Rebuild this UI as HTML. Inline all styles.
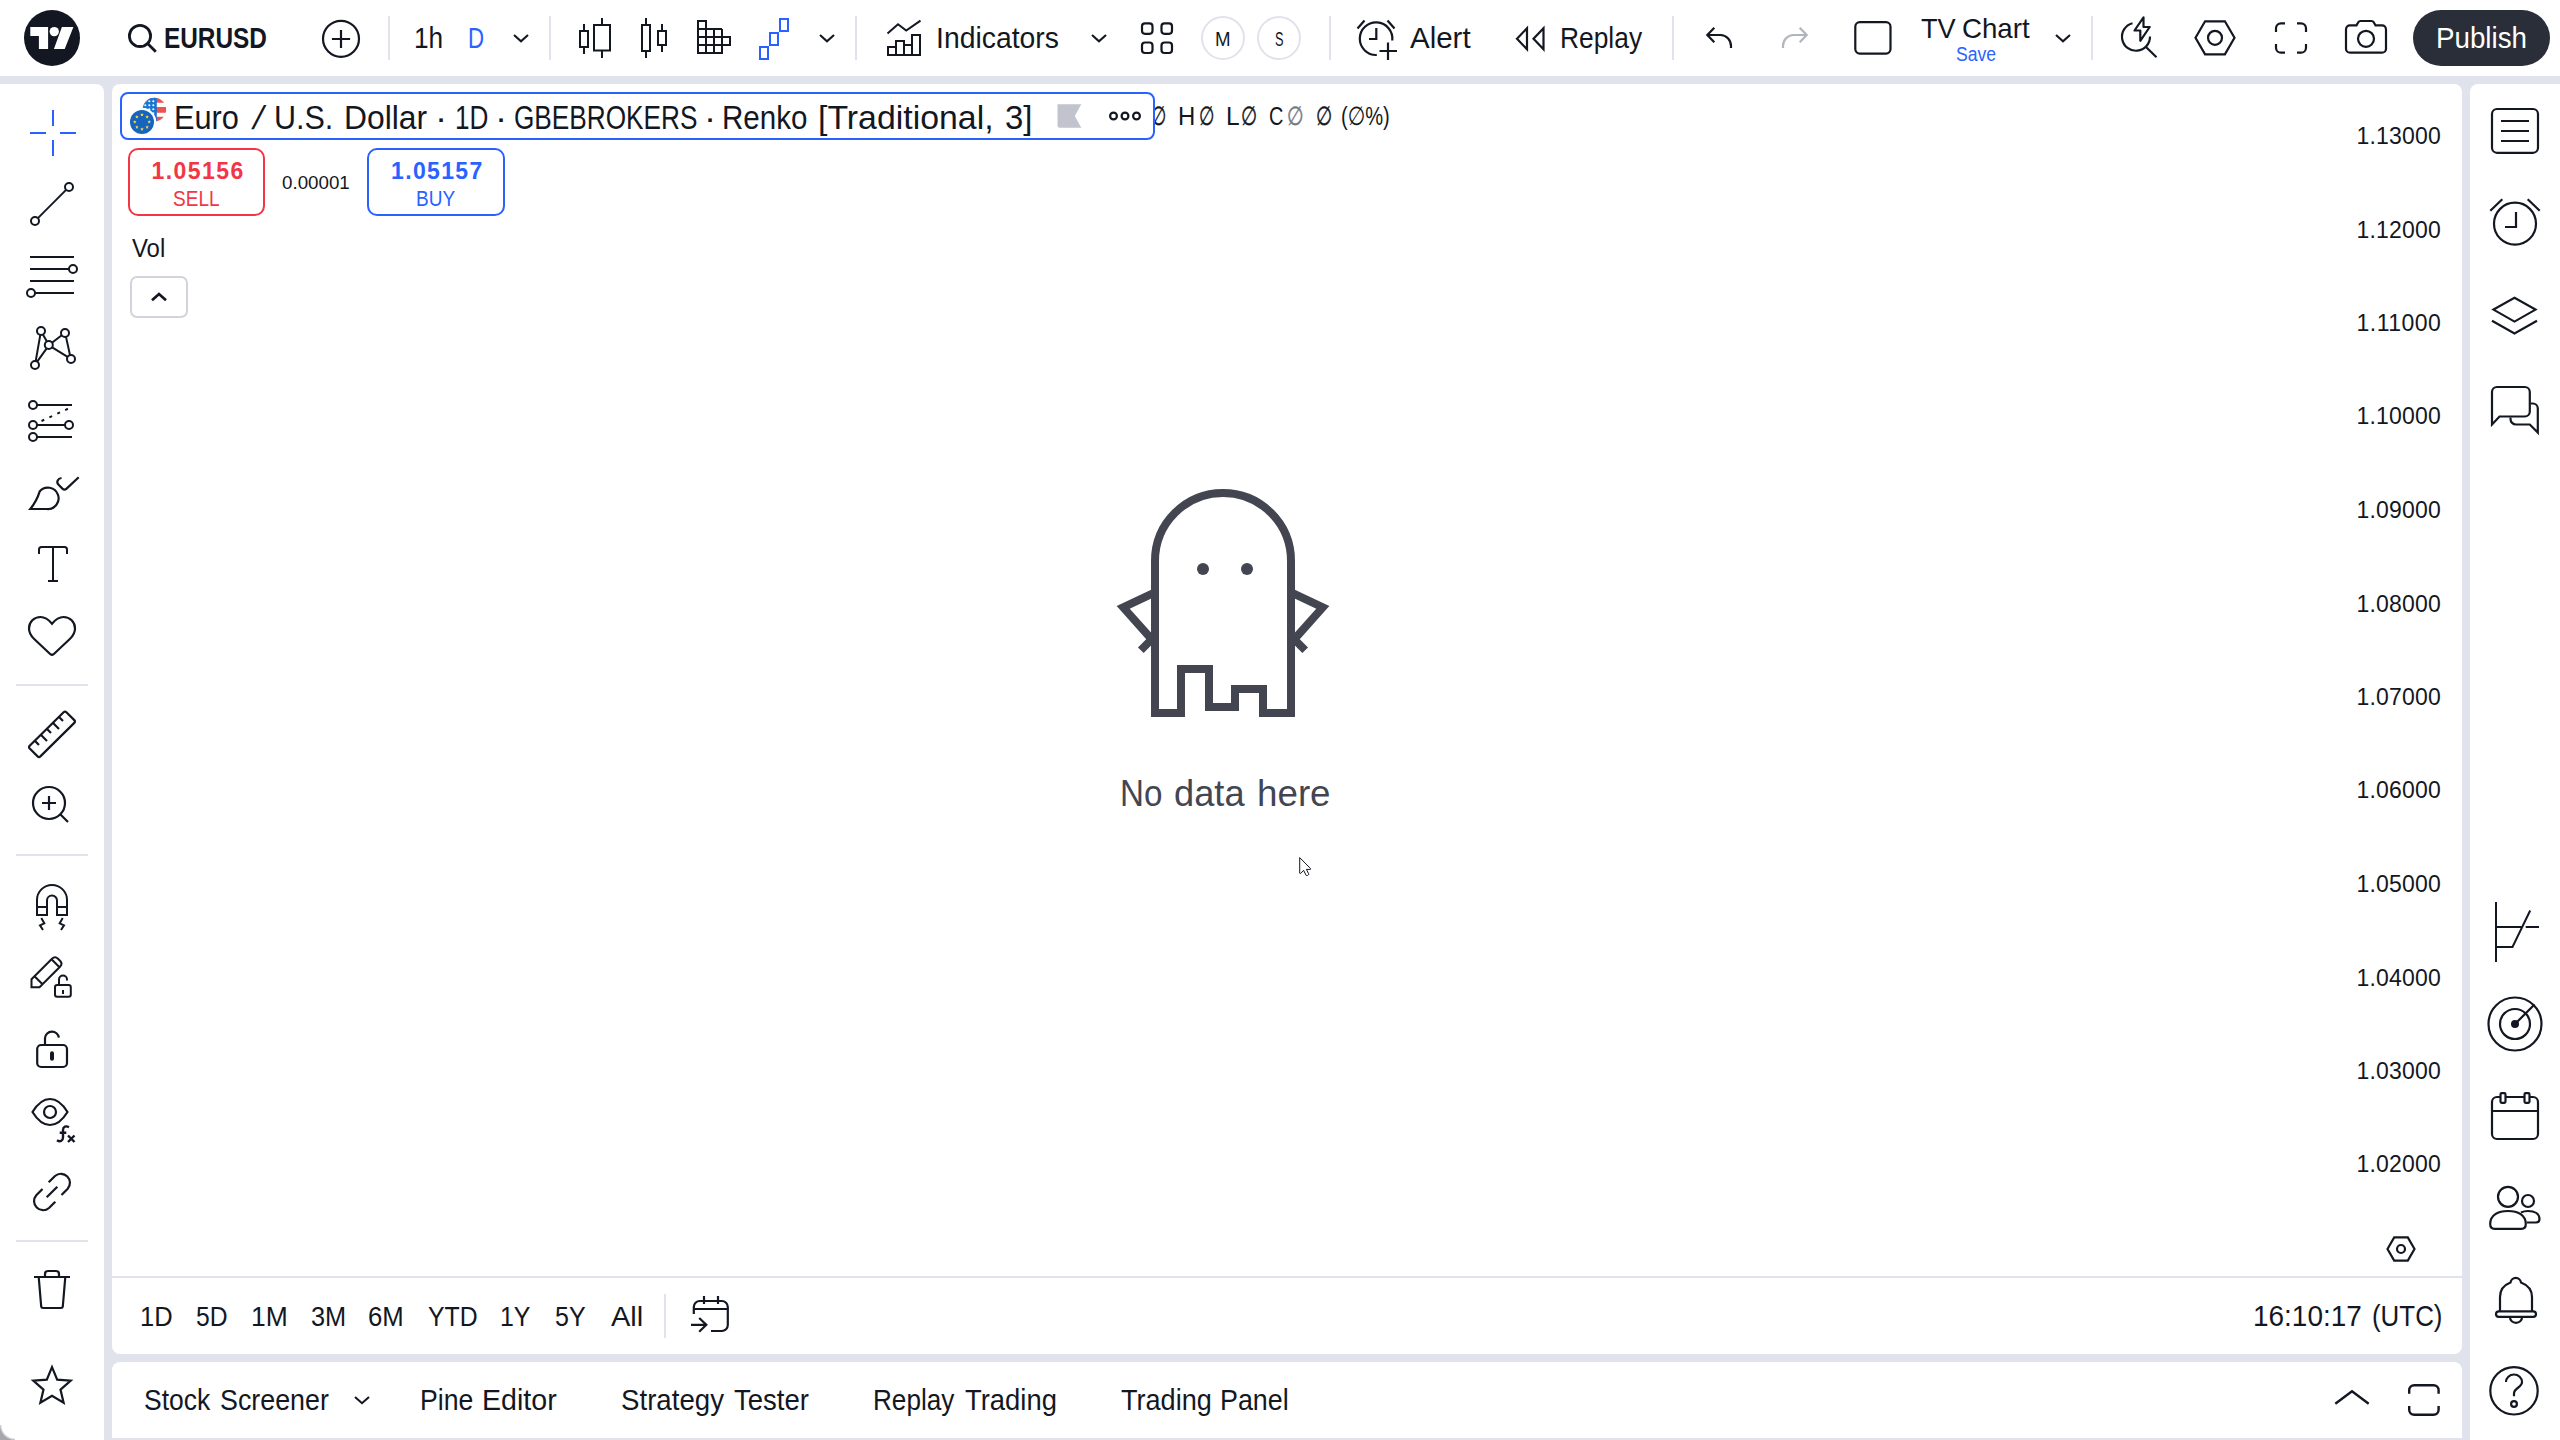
<!DOCTYPE html>
<html lang="en"><head><meta charset="utf-8"><title>EURUSD chart</title>
<style>
html,body{margin:0;padding:0}
body{width:2560px;height:1440px;overflow:hidden;background:#e0e3eb;position:relative;font-family:"Liberation Sans","DejaVu Sans",sans-serif;color:#131722}
.panel{position:absolute;background:#fff}
.t{position:absolute;white-space:nowrap;transform-origin:0 50%;display:inline-block}
.ic{position:absolute;overflow:visible;stroke-linecap:butt;stroke-linejoin:miter}
.sep{position:absolute;background:#e0e3eb}
.abs{position:absolute;box-sizing:border-box}
@media (max-width:1400px){html{zoom:.5}}
</style></head><body>
<header id="header-toolbar">
<div class="panel" style="left:0;top:0;width:2560px;height:76px"></div>
<div class="abs" style="left:24px;top:10px;width:56px;height:56px;border-radius:50%;background:#131722"></div>
<svg class="ic" style="left:24px;top:10px" width="56" height="56" viewBox="24 10 56 56" fill="none" stroke="#131722" stroke-width="2" ><path d="M30.3 27H48.1V49H38.9V36.1H30.3Z M61.9 27H73.4L64.7 49H53.9Z" fill="#fff" stroke="none"/><circle cx="54.25" cy="31.6" r="4.65" fill="#fff" stroke="none"/></svg>
<svg class="ic" style="left:126px;top:22px" width="32" height="32" viewBox="126 22 32 32" fill="none" stroke="#131722" stroke-width="2.8" ><circle cx="140" cy="35.9" r="10.6"/><path d="M147.6 43.5l8.2 8.2"/></svg>
<span class="t" style="left:164.16px;top:24.00px;font-size:29px;line-height:29px;color:#131722;font-weight:700;transform:scaleX(0.8406);">EURUSD</span>
<svg class="ic" style="left:320px;top:18px" width="42" height="42" viewBox="320 18 42 42" fill="none" stroke="#131722" stroke-width="2.2" ><circle cx="341" cy="38.8" r="18"/><path d="M331.9 39h18.2M341 29.9v18.2"/></svg>
<div class="sep" style="left:388px;top:16px;width:2px;height:44px"></div>
<div class="sep" style="left:549px;top:16px;width:2px;height:44px"></div>
<div class="sep" style="left:855px;top:16px;width:2px;height:44px"></div>
<div class="sep" style="left:1329px;top:16px;width:2px;height:44px"></div>
<div class="sep" style="left:1672px;top:16px;width:2px;height:44px"></div>
<div class="sep" style="left:2091px;top:16px;width:2px;height:44px"></div>
<span class="t" style="left:414.39px;top:24.00px;font-size:29px;line-height:29px;color:#131722;font-weight:400;transform:scaleX(0.9029);">1h</span>
<span class="t" style="left:468.47px;top:24.00px;font-size:29px;line-height:29px;color:#2962ff;font-weight:400;transform:scaleX(0.7667);">D</span>
<svg class="ic" style="left:511.7px;top:33px" width="18" height="10.4" viewBox="511.7 33 18 10.4" fill="none" stroke="#131722" stroke-width="2.1" ><path d="M513.7 35l7 6.4l7 -6.4"/></svg>
<svg class="ic" style="left:818px;top:32.8px" width="18" height="10.4" viewBox="818 32.8 18 10.4" fill="none" stroke="#131722" stroke-width="2.1" ><path d="M820 34.8l7 6.4l7 -6.4"/></svg>
<svg class="ic" style="left:1090px;top:32.8px" width="18" height="10.4" viewBox="1090 32.8 18 10.4" fill="none" stroke="#131722" stroke-width="2.1" ><path d="M1092 34.8l7 6.4l7 -6.4"/></svg>
<svg class="ic" style="left:2054.3px;top:32.8px" width="18" height="10.4" viewBox="2054.3 32.8 18 10.4" fill="none" stroke="#131722" stroke-width="2.1" ><path d="M2056.3 34.8l7 6.4l7 -6.4"/></svg>
<span class="t" style="left:935.54px;top:24.00px;font-size:29px;line-height:29px;color:#131722;font-weight:400;transform:scaleX(0.9779);">Indicators</span>
<div class="abs" style="left:1201px;top:16px;width:44px;height:44px;border-radius:50%;border:2px solid #e0e3eb"></div>
<div class="abs" style="left:1257px;top:16px;width:44px;height:44px;border-radius:50%;border:2px solid #e0e3eb"></div>
<span class="t" style="left:1215.07px;top:29.00px;font-size:20px;line-height:20px;color:#131722;font-weight:400;transform:scaleX(0.9333);">M</span>
<span class="t" style="left:1274.70px;top:29.00px;font-size:20px;line-height:20px;color:#131722;font-weight:400;transform:scaleX(0.6385);">S</span>
<span class="t" style="left:1409.50px;top:24.00px;font-size:29px;line-height:29px;color:#131722;font-weight:400;transform:scaleX(1.0156);">Alert</span>
<span class="t" style="left:1560.48px;top:24.00px;font-size:29px;line-height:29px;color:#131722;font-weight:400;transform:scaleX(0.9091);">Replay</span>
<span class="t" style="left:1921.30px;top:15.00px;font-size:28px;line-height:28px;color:#131722;font-weight:400;transform:scaleX(0.9694);">TV</span>
<span class="t" style="left:1961.81px;top:15.00px;font-size:28px;line-height:28px;color:#131722;font-weight:400;transform:scaleX(0.9883);">Chart</span>
<span class="t" style="left:1956.30px;top:45.00px;font-size:19.5px;line-height:19.5px;color:#2962ff;font-weight:400;transform:scaleX(0.9013);">Save</span>
<div class="abs" style="left:2413px;top:10px;width:137px;height:56px;border-radius:28px;background:#2a2e39"></div>
<span class="t" style="left:2435.59px;top:24.00px;font-size:29px;line-height:29px;color:#fff;font-weight:400;transform:scaleX(0.9567);">Publish</span>
<svg class="ic" style="left:576px;top:16px" width="38" height="44" viewBox="576 16 38 44" fill="none" stroke="#131722" stroke-width="2" ><rect x="580" y="31" width="8" height="16"/><path d="M584 24v7M584 47v7"/><rect x="594" y="25" width="16" height="25.5"/><path d="M602 18v7M602 50.5v7.5"/></svg>
<svg class="ic" style="left:638px;top:16px" width="32" height="44" viewBox="638 16 32 44" fill="none" stroke="#131722" stroke-width="2" ><rect x="642" y="25" width="8" height="26"/><path d="M646 18v7M646 51v7"/><rect x="658" y="31" width="8" height="14"/><path d="M662 24v7M662 45v7"/></svg>
<svg class="ic" style="left:695px;top:18px" width="38" height="38" viewBox="695 18 38 38" fill="none" stroke="#131722" stroke-width="2" ><path d="M698 21V53H722M706 21V53M714 29V53M722 29V53M730 37V45M697 21H707M698 29H722M698 37H731M698 45H731M698 53H723"/></svg>
<svg class="ic" style="left:757px;top:16px" width="34" height="46" viewBox="757 16 34 46" fill="none" stroke="#2962ff" stroke-width="2" ><rect x="760" y="47" width="8" height="12"/><rect x="770" y="33" width="8" height="12"/><rect x="780" y="19" width="8" height="12"/></svg>
<svg class="ic" style="left:884px;top:18px" width="40" height="40" viewBox="884 18 40 40" fill="none" stroke="#131722" stroke-width="2" ><path d="M887.5 33.5L898 24.2L906.2 30.6L920.5 20.6"/><path d="M888 55V47H896V55M896 47V41H904V55M904 45H912M912 55V35H920V55M887 55H921"/></svg>
<svg class="ic" style="left:1139px;top:20px" width="36" height="36" viewBox="1139 20 36 36" fill="none" stroke="#131722" stroke-width="2.2" ><rect x="1142" y="23.3" width="10.5" height="10.5" rx="3"/><rect x="1161.5" y="23.3" width="10.5" height="10.5" rx="3"/><rect x="1142" y="42.5" width="10.5" height="10.5" rx="3"/><rect x="1161.5" y="42.5" width="10.5" height="10.5" rx="3"/></svg>
<svg class="ic" style="left:1354px;top:16px" width="46" height="46" viewBox="1354 16 46 46" fill="none" stroke="#131722" stroke-width="2.2" ><path d="M1392.3 40.5A16.3 16.3 0 1 0 1376.8 55"/><path d="M1369 39H1376.3V28"/><path d="M1357.5 28.5L1364.5 20.5M1387.5 20.5L1394.5 28.5"/><path d="M1379.5 51H1397M1388 42.5V60"/></svg>
<svg class="ic" style="left:1512px;top:24px" width="36" height="30" viewBox="1512 24 36 30" fill="none" stroke="#131722" stroke-width="2.2" ><path d="M1527 28.2V49.3L1517 38.75Z M1543.5 28.2V49.3L1533.5 38.75Z"/></svg>
<svg class="ic" style="left:1703px;top:24px" width="32" height="28" viewBox="1703 24 32 28" fill="none" stroke="#131722" stroke-width="2.2" ><path d="M1714.3 27.7L1707.3 35L1714.3 42.3M1707.5 35H1720.5A10.5 11 0 0 1 1731 46V48"/></svg>
<svg class="ic" style="left:1780px;top:24px" width="32" height="28" viewBox="1780 24 32 28" fill="none" stroke="#b2b5be" stroke-width="2.2" ><path d="M1799.7 27.7L1806.7 35L1799.7 42.3M1806.5 35H1793.5A10.5 11 0 0 0 1783 46V48"/></svg>
<svg class="ic" style="left:1852px;top:19px" width="42" height="38" viewBox="1852 19 42 38" fill="none" stroke="#131722" stroke-width="2.2" ><rect x="1855.3" y="22.2" width="35.2" height="31.4" rx="4.5"/></svg>
<svg class="ic" style="left:2118px;top:14px" width="42" height="46" viewBox="2118 14 42 46" fill="none" stroke="#131722" stroke-width="2.2" ><path d="M2132.5 23.2A14 14 0 1 0 2150 36.5"/><path d="M2146 47L2156.5 57.3"/><path d="M2143.5 17.3L2134.5 30.5H2140.3V40.8L2149.7 27H2143.5Z" stroke-linejoin="round"/></svg>
<svg class="ic" style="left:2192px;top:18px" width="46" height="40" viewBox="2192 18 46 40" fill="none" stroke="#131722" stroke-width="2.2" ><path d="M2195.5 37.8L2205.1 21.3H2224.9L2234.5 37.8L2224.9 54.3H2205.1Z"/><circle cx="2215" cy="37.8" r="7"/></svg>
<svg class="ic" style="left:2273px;top:20px" width="36" height="36" viewBox="2273 20 36 36" fill="none" stroke="#131722" stroke-width="2.2" ><path d="M2276 32V28.3a5 5 0 0 1 5-5H2285M2297 23.3H2301a5 5 0 0 1 5 5V32M2306 44V47.7a5 5 0 0 1-5 5H2297M2285 52.7H2281a5 5 0 0 1-5-5V44"/></svg>
<svg class="ic" style="left:2343px;top:18px" width="46" height="38" viewBox="2343 18 46 38" fill="none" stroke="#131722" stroke-width="2.2" ><path d="M2350 25.4H2356.5L2358.3 22.2Q2359 21 2360.4 21H2371.6Q2373 21 2373.7 22.2L2375.5 25.4H2382a4 4 0 0 1 4 4V48.7a4 4 0 0 1-4 4H2350a4 4 0 0 1-4-4V29.4a4 4 0 0 1 4-4Z"/><circle cx="2366" cy="38.8" r="8"/></svg>
</header>
<nav id="drawing-toolbar">
<div class="panel" style="left:0;top:84px;width:104px;height:1356px;border-top-right-radius:8px"></div>
<div class="abs" style="left:0;top:1425px;width:15px;height:15px;background:radial-gradient(circle at 15px 0px, rgba(166,168,173,0) 13px, #a6a8ad 15.5px)"></div>
<svg class="ic" style="left:28px;top:108px" width="50" height="50" viewBox="28 108 50 50" fill="none" stroke="#2962ff" stroke-width="2" ><path d="M53 110v16M53 140v16M30 133h16M60 133h16"/></svg>
<svg class="ic" style="left:28px;top:180px" width="48" height="48" viewBox="28 180 48 48" fill="none" stroke="#131722" stroke-width="2" ><circle cx="69" cy="187" r="4"/><circle cx="35" cy="221" r="4"/><path d="M37.9 218.1L66.1 189.9"/></svg>
<svg class="ic" style="left:24px;top:252px" width="56" height="46" viewBox="24 252 56 46" fill="none" stroke="#131722" stroke-width="2" ><path d="M30 257H74M30 269H69M30 281H74M35 293H74"/><circle cx="73" cy="269" r="4"/><circle cx="31" cy="293" r="4"/></svg>
<svg class="ic" style="left:28px;top:324px" width="50" height="48" viewBox="28 324 50 48" fill="none" stroke="#131722" stroke-width="2" ><path d="M40.3 334.9L35.7 361.1M42.9 334.5L46.9 341.5M46.7 348.4L37.2 361.6M52 342.7L61.7 335.3M66 336.9L70 355.1M52.2 347.4L67.6 356.9"/><circle cx="41" cy="331" r="4"/><circle cx="65" cy="333" r="4"/><circle cx="48.8" cy="345" r="4"/><circle cx="71" cy="359" r="4"/><circle cx="35" cy="365" r="4"/></svg>
<svg class="ic" style="left:26px;top:398px" width="52" height="46" viewBox="26 398 52 46" fill="none" stroke="#131722" stroke-width="2" ><circle cx="33" cy="405" r="4"/><circle cx="33" cy="425" r="4"/><circle cx="33" cy="437" r="4"/><circle cx="69" cy="425" r="4"/><path d="M37 405H72M37 425H65M37 437H72"/><path d="M41.5 421L68.5 408.5" stroke-dasharray="3 5.7"/></svg>
<svg class="ic" style="left:26px;top:474px" width="56" height="40" viewBox="26 474 56 40" fill="none" stroke="#131722" stroke-width="2.2" ><path d="M30.3 509H46.5A10.75 10.75 0 1 0 39.8 491.2C37.5 498.5 34.5 504 30.3 509Z"/><path d="M61.5 478C58 478.3 55.8 482 58.6 484.8L62.4 488.6Q64.5 490.6 66.6 488.6L78.7 477.2"/></svg>
<svg class="ic" style="left:36px;top:544px" width="34" height="40" viewBox="36 544 34 40" fill="none" stroke="#131722" stroke-width="2" ><path d="M39 554V549.5a2.5 2.5 0 0 1 2.5-2.5H64.5a2.5 2.5 0 0 1 2.5 2.5V554M53 547V581M48 581H58"/></svg>
<svg class="ic" style="left:26px;top:614px" width="52" height="44" viewBox="26 614 52 44" fill="none" stroke="#131722" stroke-width="2.2" ><path d="M52 623.8C48.5 619.5 44.5 617 40.5 617C34 617 29 622 29 628.5C29 633 31 636 34.2 639L50.4 654.2Q52 655.6 53.6 654.2L69.8 639C73 636 75 633 75 628.5C75 622 70 617 63.5 617C59.5 617 55.5 619.5 52 623.8Z"/></svg>
<svg class="ic" style="left:26px;top:708px" width="52" height="52" viewBox="26 708 52 52" fill="none" stroke="#131722" stroke-width="2.2" ><path d="M63.6 712.2Q65 710.9 66.4 712.2L74.3 720.1Q75.6 721.5 74.3 722.9L40.4 756.4Q39 757.7 37.6 756.4L29.7 748.5Q28.4 747.1 29.7 745.7Z"/><path d="M34.8 740.8L39 745M40.8 734.8L47 741M46.8 728.8L51 733M52.8 722.8L59 729M58.8 716.8L63 721"/></svg>
<svg class="ic" style="left:30px;top:784px" width="42" height="42" viewBox="30 784 42 42" fill="none" stroke="#131722" stroke-width="2.2" ><circle cx="49" cy="803" r="16"/><path d="M60.5 814.5L68 822M42 803H56M49 796V810"/></svg>
<svg class="ic" style="left:34px;top:882px" width="36" height="50" viewBox="34 882 36 50" fill="none" stroke="#131722" stroke-width="2" ><path d="M37 915V900A15 15 0 0 1 67 900V915H57V900.5A5 5 0 0 0 47 900.5V915Z M37 907H47M57 907H67"/><path d="M41.3 918L44.3 923.3L40 925.3L43 930M62.7 918L59.7 923.3L64 925.3L61 930"/></svg>
<svg class="ic" style="left:28px;top:953px" width="46" height="46" viewBox="28 953 46 46" fill="none" stroke="#131722" stroke-width="2" ><path d="M31.5 979.3L52 958.8Q55 955.8 58 958.8L60 960.8Q63 963.8 60 966.8L39.5 987.3H31.5Z M34.5 976.3L42.5 984.3M51.5 959.3L59.5 967.3"/><rect x="55" y="985" width="15.8" height="11.8" rx="2.2" fill="#fff"/><path d="M59 985V979.5a4 4 0 0 1 8 0V980.5M63 990V994"/></svg>
<svg class="ic" style="left:34px;top:1028px" width="36" height="42" viewBox="34 1028 36 42" fill="none" stroke="#131722" stroke-width="2.2" ><rect x="37.2" y="1045" width="29.8" height="22" rx="4"/><path d="M45 1045V1038A7 7 0 0 1 58.9 1037.6"/><path d="M52 1053.3V1058.7" stroke-width="4" stroke-linecap="round"/></svg>
<svg class="ic" style="left:30px;top:1096px" width="48" height="50" viewBox="30 1096 48 50" fill="none" stroke="#131722" stroke-width="2.2" ><path d="M32.5 1112C38 1103 44 1099 50 1099C56 1099 62 1103 67.5 1112C62 1121 56 1125 50 1125C44 1125 38 1121 32.5 1112Z"/><circle cx="50" cy="1112" r="6"/><path d="M69 1127.2C66 1125.5 63 1126.5 63 1130V1137.5C63 1141 60 1142.3 57 1140.3M59.7 1132.8H66.3M68 1135.5L74.5 1142M74.5 1135.5L68 1142" stroke-width="2.4"/></svg>
<svg class="ic" style="left:30px;top:1170px" width="44" height="44" viewBox="30 1170 44 44" fill="none" stroke="#131722" stroke-width="2.2" ><path d="M48.7 1182.3L55 1176A9 9 0 0 1 67.7 1188.7L61.5 1195M55.3 1201.7L49 1208A9 9 0 0 1 36.3 1195.3L42.5 1189M46.7 1197.3L57.3 1186.7"/></svg>
<svg class="ic" style="left:32px;top:1268px" width="40" height="44" viewBox="32 1268 40 44" fill="none" stroke="#131722" stroke-width="2.2" ><path d="M34 1277H70M45 1277V1274a3 3 0 0 1 3-3H56a3 3 0 0 1 3 3V1277M38.7 1277L41.2 1306.5Q41.4 1308 43 1308H61Q62.6 1308 62.8 1306.5L65.3 1277"/></svg>
<svg class="ic" style="left:30px;top:1363px" width="44" height="44" viewBox="30 1363 44 44" fill="none" stroke="#131722" stroke-width="2.2" ><path d="M52.0 1367.1L57.2 1379.6L70.7 1380.7L60.5 1389.6L63.6 1402.7L52.0 1395.7L40.4 1402.7L43.5 1389.6L33.3 1380.7L46.8 1379.6Z"/></svg>
<div class="sep" style="left:16px;top:684px;width:72px;height:2px"></div>
<div class="sep" style="left:16px;top:854px;width:72px;height:2px"></div>
<div class="sep" style="left:16px;top:1240px;width:72px;height:2px"></div>
</nav>
<main id="chart-pane">
<div class="panel" style="left:112px;top:84px;width:2350px;height:1270px;border-radius:8px"></div>
<div class="sep" style="left:112px;top:1276px;width:2350px;height:2px"></div>
<span class="t" style="left:1130.14px;top:103.00px;font-size:26px;line-height:26px;color:#131722;font-weight:400;transform:scaleX(0.8611);">O</span>
<span class="t" style="left:1150.83px;top:103.00px;font-size:26px;line-height:26px;color:#131722;font-weight:400;transform:scaleX(0.6750);-webkit-text-stroke:0.45px currentColor;">∅</span>
<span class="t" style="left:1178.16px;top:103.00px;font-size:26px;line-height:26px;color:#131722;font-weight:400;transform:scaleX(0.9200);">H</span>
<span class="t" style="left:1198.72px;top:103.00px;font-size:26px;line-height:26px;color:#131722;font-weight:400;transform:scaleX(0.6800);-webkit-text-stroke:0.45px currentColor;">∅</span>
<span class="t" style="left:1225.62px;top:103.00px;font-size:26px;line-height:26px;color:#131722;font-weight:400;transform:scaleX(0.9417);">L</span>
<span class="t" style="left:1241.29px;top:103.00px;font-size:26px;line-height:26px;color:#131722;font-weight:400;transform:scaleX(0.7100);-webkit-text-stroke:0.45px currentColor;">∅</span>
<span class="t" style="left:1269.24px;top:103.00px;font-size:26px;line-height:26px;color:#131722;font-weight:400;transform:scaleX(0.7647);">C</span>
<span class="t" style="left:1287.07px;top:103.00px;font-size:26px;line-height:26px;color:#787b86;font-weight:400;transform:scaleX(0.7300);-webkit-text-stroke:0.45px currentColor;">∅</span>
<span class="t" style="left:1315.59px;top:103.00px;font-size:26px;line-height:26px;color:#131722;font-weight:400;transform:scaleX(0.7150);-webkit-text-stroke:0.45px currentColor;">∅</span>
<span class="t" style="left:1340.53px;top:103.00px;font-size:26px;line-height:26px;color:#131722;font-weight:400;transform:scaleX(0.7733);">(∅%)</span>
<div class="abs" style="left:120px;top:92px;width:1035px;height:48px;border:2px solid #2962ff;border-radius:8px;background:#fff"></div>
<span class="t" style="left:174.14px;top:101.00px;font-size:33px;line-height:33px;color:#131722;font-weight:400;transform:scaleX(0.9314);">Euro</span>
<span class="t" style="left:254.30px;top:101.00px;font-size:33px;line-height:33px;color:#131722;font-weight:400;transform:scaleX(0.9000);transform:skewX(-14deg);">/</span>
<span class="t" style="left:273.95px;top:101.00px;font-size:33px;line-height:33px;color:#131722;font-weight:400;transform:scaleX(0.9248);">U.S.</span>
<span class="t" style="left:344.37px;top:101.00px;font-size:33px;line-height:33px;color:#131722;font-weight:400;transform:scaleX(0.9644);">Dollar</span>
<span class="t" style="left:435.00px;top:101.00px;font-size:33px;line-height:33px;color:#131722;font-weight:400;transform:scaleX(1.1000);">·</span>
<span class="t" style="left:454.71px;top:101.00px;font-size:33px;line-height:33px;color:#131722;font-weight:400;transform:scaleX(0.7928);">1D</span>
<span class="t" style="left:495.00px;top:101.00px;font-size:33px;line-height:33px;color:#131722;font-weight:400;transform:scaleX(1.1000);">·</span>
<span class="t" style="left:513.71px;top:101.00px;font-size:33px;line-height:33px;color:#131722;font-weight:400;transform:scaleX(0.7937);">GBEBROKERS</span>
<span class="t" style="left:704.00px;top:101.00px;font-size:33px;line-height:33px;color:#131722;font-weight:400;transform:scaleX(1.1000);">·</span>
<span class="t" style="left:722.01px;top:101.00px;font-size:33px;line-height:33px;color:#131722;font-weight:400;transform:scaleX(0.8964);">Renko</span>
<span class="t" style="left:817.95px;top:101.00px;font-size:33px;line-height:33px;color:#131722;font-weight:400;transform:scaleX(1.0256);">[Traditional,</span>
<span class="t" style="left:1005.30px;top:101.00px;font-size:33px;line-height:33px;color:#131722;font-weight:400;transform:scaleX(0.9978);">3]</span>
<div class="abs" style="left:128px;top:148px;width:137px;height:68px;border:2px solid #f23645;border-radius:10px"></div>
<div class="abs" style="left:367px;top:148px;width:138px;height:68px;border:2px solid #2962ff;border-radius:10px"></div>
<span class="t" style="left:151.50px;top:160.00px;font-size:23px;line-height:23px;color:#f23645;font-weight:700;transform:scaleX(1.0000);letter-spacing:1.442px;">1.05156</span>
<span class="t" style="left:172.63px;top:188.00px;font-size:22px;line-height:22px;color:#f23645;font-weight:400;transform:scaleX(0.8653);">SELL</span>
<span class="t" style="left:281.80px;top:173.00px;font-size:19px;line-height:19px;color:#131722;font-weight:400;transform:scaleX(0.9866);">0.00001</span>
<span class="t" style="left:391.00px;top:160.00px;font-size:23px;line-height:23px;color:#2962ff;font-weight:700;transform:scaleX(1.0000);letter-spacing:1.359px;">1.05157</span>
<span class="t" style="left:415.64px;top:188.00px;font-size:22px;line-height:22px;color:#2962ff;font-weight:400;transform:scaleX(0.8640);">BUY</span>
<span class="t" style="left:131.50px;top:235.00px;font-size:26px;line-height:26px;color:#131722;font-weight:400;transform:scaleX(0.9189);">Vol</span>
<div class="abs" style="left:130px;top:276px;width:58px;height:42px;border:2px solid #d1d4dc;border-radius:7px"></div>
<svg class="ic" style="left:150px;top:292.2px" width="18" height="10.2" viewBox="150 292.2 18 10.2" fill="none" stroke="#131722" stroke-width="2.8" ><path d="M152 300.4l7 -6.2l7 6.2"/></svg>
<span class="t" style="left:2356.50px;top:125.00px;font-size:23px;line-height:23px;color:#131722;font-weight:400;transform:scaleX(1.0000);letter-spacing:0.192px;">1.13000</span>
<span class="t" style="left:2356.50px;top:219.00px;font-size:23px;line-height:23px;color:#131722;font-weight:400;transform:scaleX(1.0000);letter-spacing:0.192px;">1.12000</span>
<span class="t" style="left:2356.50px;top:312.00px;font-size:23px;line-height:23px;color:#131722;font-weight:400;transform:scaleX(1.0000);letter-spacing:0.477px;">1.11000</span>
<span class="t" style="left:2356.50px;top:405.00px;font-size:23px;line-height:23px;color:#131722;font-weight:400;transform:scaleX(1.0000);letter-spacing:0.192px;">1.10000</span>
<span class="t" style="left:2356.50px;top:499.00px;font-size:23px;line-height:23px;color:#131722;font-weight:400;transform:scaleX(1.0000);letter-spacing:0.192px;">1.09000</span>
<span class="t" style="left:2356.50px;top:593.00px;font-size:23px;line-height:23px;color:#131722;font-weight:400;transform:scaleX(1.0000);letter-spacing:0.192px;">1.08000</span>
<span class="t" style="left:2356.50px;top:686.00px;font-size:23px;line-height:23px;color:#131722;font-weight:400;transform:scaleX(1.0000);letter-spacing:0.192px;">1.07000</span>
<span class="t" style="left:2356.50px;top:779.00px;font-size:23px;line-height:23px;color:#131722;font-weight:400;transform:scaleX(1.0000);letter-spacing:0.192px;">1.06000</span>
<span class="t" style="left:2356.50px;top:873.00px;font-size:23px;line-height:23px;color:#131722;font-weight:400;transform:scaleX(1.0000);letter-spacing:0.192px;">1.05000</span>
<span class="t" style="left:2356.50px;top:967.00px;font-size:23px;line-height:23px;color:#131722;font-weight:400;transform:scaleX(1.0000);letter-spacing:0.192px;">1.04000</span>
<span class="t" style="left:2356.50px;top:1060.00px;font-size:23px;line-height:23px;color:#131722;font-weight:400;transform:scaleX(1.0000);letter-spacing:0.192px;">1.03000</span>
<span class="t" style="left:2356.50px;top:1153.00px;font-size:23px;line-height:23px;color:#131722;font-weight:400;transform:scaleX(1.0000);letter-spacing:0.192px;">1.02000</span>
<span class="t" style="left:1120.11px;top:775.00px;font-size:37px;line-height:37px;color:#434651;font-weight:400;transform:scaleX(0.8966);">No</span>
<span class="t" style="left:1173.52px;top:775.00px;font-size:37px;line-height:37px;color:#434651;font-weight:400;transform:scaleX(0.9799);">data</span>
<span class="t" style="left:1256.51px;top:775.00px;font-size:37px;line-height:37px;color:#434651;font-weight:400;transform:scaleX(0.9932);">here</span>
<span class="t" style="left:139.78px;top:1303.00px;font-size:28px;line-height:28px;color:#131722;font-weight:400;transform:scaleX(0.9118);">1D</span>
<span class="t" style="left:196.12px;top:1303.00px;font-size:28px;line-height:28px;color:#131722;font-weight:400;transform:scaleX(0.8817);">5D</span>
<span class="t" style="left:251.11px;top:1303.00px;font-size:28px;line-height:28px;color:#131722;font-weight:400;transform:scaleX(0.9446);">1M</span>
<span class="t" style="left:310.69px;top:1303.00px;font-size:28px;line-height:28px;color:#131722;font-weight:400;transform:scaleX(0.9051);">3M</span>
<span class="t" style="left:368.48px;top:1303.00px;font-size:28px;line-height:28px;color:#131722;font-weight:400;transform:scaleX(0.9187);">6M</span>
<span class="t" style="left:427.50px;top:1303.00px;font-size:28px;line-height:28px;color:#131722;font-weight:400;transform:scaleX(0.8854);">YTD</span>
<span class="t" style="left:499.82px;top:1303.00px;font-size:28px;line-height:28px;color:#131722;font-weight:400;transform:scaleX(0.8903);">1Y</span>
<span class="t" style="left:555.11px;top:1303.00px;font-size:28px;line-height:28px;color:#131722;font-weight:400;transform:scaleX(0.8936);">5Y</span>
<span class="t" style="left:611.00px;top:1303.00px;font-size:28px;line-height:28px;color:#131722;font-weight:400;transform:scaleX(1.0369);">All</span>
<div class="sep" style="left:664px;top:1294px;width:1.5px;height:44px"></div>
<span class="t" style="left:2253.07px;top:1302.00px;font-size:29px;line-height:29px;color:#131722;font-weight:400;transform:scaleX(0.9640);">16:10:17</span>
<span class="t" style="left:2371.61px;top:1302.00px;font-size:29px;line-height:29px;color:#131722;font-weight:400;transform:scaleX(0.8930);">(UTC)</span>
<svg class="ic" style="left:2385px;top:1235px" width="32" height="28" viewBox="2385 1235 32 28" fill="none" stroke="#131722" stroke-width="2.2" ><path d="M2387.5 1249L2394.2 1237.4H2407.8L2414.5 1249L2407.8 1260.6H2394.2Z"/><circle cx="2401" cy="1249" r="4"/></svg>
<svg class="ic" style="left:688px;top:1294px" width="44" height="40" viewBox="688 1294 44 40" fill="none" stroke="#131722" stroke-width="2.2" ><path d="M693.8 1314V1307a6 6 0 0 1 6-6H721.8a6 6 0 0 1 6 6V1325a6 6 0 0 1-6 6H711M693.8 1309H727.8M704 1296V1304M718 1296V1304M691 1324.8H706M699.2 1318L706.3 1324.8L699.2 1331.7"/></svg>
<svg class="ic" style="left:1112px;top:486px" width="222" height="234" viewBox="1112 486 222 234" fill="none" stroke="#434651" stroke-width="8" ><path d="M1155 561A68 68 0 0 1 1291 561V713H1263V689H1235V707H1209V669H1181V713H1155Z"/><path d="M1155 592.3L1123.2 607.4L1155 643M1151.5 639.5L1140.8 650.3"/><path d="M1291 592.3L1322.8 607.4L1291 643M1294.5 639.5L1305.2 650.3"/><circle cx="1203" cy="569" r="6" fill="#434651" stroke="none"/><circle cx="1247" cy="569" r="6" fill="#434651" stroke="none"/></svg>
<svg class="ic" style="left:1298px;top:856px" width="14" height="22" viewBox="1298 856 14 22" fill="none" stroke="#131722" stroke-width="1" ><path d="M1299.7 857.6V873.2Q1300.2 873.9 1300.9 873.3L1303.6 870.3L1306 875.2Q1306.6 875.9 1307.4 875.5L1308.3 875Q1309 874.4 1308.6 873.7L1306.4 869.4H1310.4Q1311 869.2 1310.6 868.6Z" fill="#fff" stroke-linejoin="round"/></svg>
<svg class="ic" style="left:128px;top:96px" width="40" height="40" viewBox="128 96 40 40" fill="none" stroke="#131722" stroke-width="2" ><defs><clipPath id="usc"><circle cx="154.4" cy="109.6" r="11.75"/></clipPath></defs><g clip-path="url(#usc)" stroke="none"><rect x="142" y="97" width="26" height="26" fill="#fff"/><path d="M142 97h26v5.7h-26zM142 107h26v5.8h-26zM142 116.8h26v6h-26z" fill="#ef5350"/><rect x="142" y="97" width="14.8" height="26" fill="#1976d2"/><g fill="#fff"><circle cx="141.3" cy="97.3" r="1.05"/><circle cx="141.3" cy="101.3" r="1.05"/><circle cx="141.3" cy="105.3" r="1.05"/><circle cx="141.3" cy="109.3" r="1.05"/><circle cx="141.3" cy="113.3" r="1.05"/><circle cx="145.3" cy="97.3" r="1.05"/><circle cx="145.3" cy="101.3" r="1.05"/><circle cx="145.3" cy="105.3" r="1.05"/><circle cx="145.3" cy="109.3" r="1.05"/><circle cx="145.3" cy="113.3" r="1.05"/><circle cx="149.3" cy="97.3" r="1.05"/><circle cx="149.3" cy="101.3" r="1.05"/><circle cx="149.3" cy="105.3" r="1.05"/><circle cx="149.3" cy="109.3" r="1.05"/><circle cx="149.3" cy="113.3" r="1.05"/><circle cx="153.3" cy="97.3" r="1.05"/><circle cx="153.3" cy="101.3" r="1.05"/><circle cx="153.3" cy="105.3" r="1.05"/><circle cx="153.3" cy="109.3" r="1.05"/><circle cx="153.3" cy="113.3" r="1.05"/></g></g><circle cx="142" cy="122" r="14.3" fill="#fff" stroke="none"/><circle cx="142" cy="122" r="12" fill="#1565c0" stroke="none"/><g fill="#fdd835" stroke="none"><path d="M142.00 112.90L142.50 114.11L143.81 114.21L142.81 115.06L143.12 116.34L142.00 115.65L140.88 116.34L141.19 115.06L140.19 114.21L141.50 114.11Z"/><path d="M147.09 115.01L147.59 116.22L148.90 116.32L147.90 117.17L148.21 118.45L147.09 117.76L145.97 118.45L146.28 117.17L145.28 116.32L146.59 116.22Z"/><path d="M149.20 120.10L149.70 121.31L151.01 121.41L150.01 122.26L150.32 123.54L149.20 122.85L148.08 123.54L148.39 122.26L147.39 121.41L148.70 121.31Z"/><path d="M147.09 125.19L147.59 126.40L148.90 126.50L147.90 127.35L148.21 128.63L147.09 127.94L145.97 128.63L146.28 127.35L145.28 126.50L146.59 126.40Z"/><path d="M142.00 127.30L142.50 128.51L143.81 128.61L142.81 129.46L143.12 130.74L142.00 130.05L140.88 130.74L141.19 129.46L140.19 128.61L141.50 128.51Z"/><path d="M136.91 125.19L137.41 126.40L138.72 126.50L137.72 127.35L138.03 128.63L136.91 127.94L135.79 128.63L136.10 127.35L135.10 126.50L136.41 126.40Z"/><path d="M134.80 120.10L135.30 121.31L136.61 121.41L135.61 122.26L135.92 123.54L134.80 122.85L133.68 123.54L133.99 122.26L132.99 121.41L134.30 121.31Z"/><path d="M136.91 115.01L137.41 116.22L138.72 116.32L137.72 117.17L138.03 118.45L136.91 117.76L135.79 118.45L136.10 117.17L135.10 116.32L136.41 116.22Z"/></g></svg>
<svg class="ic" style="left:1056px;top:103px" width="26" height="26" viewBox="1056 103 26 26" fill="none" stroke="#131722" stroke-width="2" ><path d="M1057.5 104.2H1081.3L1074.8 116L1081.3 127.8H1059.5Q1057.5 127.8 1057.5 125.8Z" fill="#c1c4cd" stroke="none"/></svg>
<svg class="ic" style="left:1106px;top:110px" width="38" height="12" viewBox="1106 110 38 12" fill="none" stroke="#131722" stroke-width="2.2" ><circle cx="1113.5" cy="116" r="3.4"/><circle cx="1125" cy="116" r="3.4"/><circle cx="1136.5" cy="116" r="3.4"/></svg>
</main>
<footer id="bottom-panel">
<div class="panel" style="left:112px;top:1362px;width:2350px;height:76px;border-radius:8px 8px 0 0"></div>
<span class="t" style="left:143.89px;top:1386.00px;font-size:29px;line-height:29px;color:#131722;font-weight:400;transform:scaleX(0.9135);">Stock</span>
<span class="t" style="left:220.38px;top:1386.00px;font-size:29px;line-height:29px;color:#131722;font-weight:400;transform:scaleX(0.9247);">Screener</span>
<span class="t" style="left:419.66px;top:1386.00px;font-size:29px;line-height:29px;color:#131722;font-weight:400;transform:scaleX(0.9178);">Pine</span>
<span class="t" style="left:481.83px;top:1386.00px;font-size:29px;line-height:29px;color:#131722;font-weight:400;transform:scaleX(0.9865);">Editor</span>
<span class="t" style="left:621.05px;top:1386.00px;font-size:29px;line-height:29px;color:#131722;font-weight:400;transform:scaleX(0.9535);">Strategy</span>
<span class="t" style="left:734.20px;top:1386.00px;font-size:29px;line-height:29px;color:#131722;font-weight:400;transform:scaleX(0.9494);">Tester</span>
<span class="t" style="left:873.40px;top:1386.00px;font-size:29px;line-height:29px;color:#131722;font-weight:400;transform:scaleX(0.9012);">Replay</span>
<span class="t" style="left:965.00px;top:1386.00px;font-size:29px;line-height:29px;color:#131722;font-weight:400;transform:scaleX(0.9446);">Trading</span>
<span class="t" style="left:1121.30px;top:1386.00px;font-size:29px;line-height:29px;color:#131722;font-weight:400;transform:scaleX(0.9332);">Trading</span>
<span class="t" style="left:1219.95px;top:1386.00px;font-size:29px;line-height:29px;color:#131722;font-weight:400;transform:scaleX(0.9261);">Panel</span>
<svg class="ic" style="left:352.9px;top:1395px" width="18" height="10.2" viewBox="352.9 1395 18 10.2" fill="none" stroke="#131722" stroke-width="2.1" ><path d="M354.9 1397l7 6.2l7 -6.2"/></svg>
<svg class="ic" style="left:2332px;top:1388px" width="40" height="18" viewBox="2332 1388 40 18" fill="none" stroke="#131722" stroke-width="2.4" ><path d="M2335.3 1403.7L2352 1391.2L2368.7 1403.7"/></svg>
<svg class="ic" style="left:2406px;top:1382px" width="36" height="36" viewBox="2406 1382 36 36" fill="none" stroke="#131722" stroke-width="2.4" ><path d="M2409.2 1393.8V1390.2a5 5 0 0 1 5-5H2433.6a5 5 0 0 1 5 5V1393.8M2409.2 1406V1409.8a5 5 0 0 0 5 5H2433.6a5 5 0 0 0 5-5V1406"/></svg>
</footer>
<aside id="widget-toolbar">
<div class="panel" style="left:2470px;top:84px;width:90px;height:1356px;border-top-left-radius:8px"></div>
<svg class="ic" style="left:2489px;top:106px" width="52" height="50" viewBox="2489 106 52 50" fill="none" stroke="#131722" stroke-width="2.2" ><rect x="2492" y="109" width="46" height="43.8" rx="5"/><path d="M2501 121H2529M2501 131H2529M2501 141H2529"/></svg>
<svg class="ic" style="left:2487px;top:196px" width="56" height="52" viewBox="2487 196 56 52" fill="none" stroke="#131722" stroke-width="2.2" ><circle cx="2515" cy="223.7" r="21"/><path d="M2505 227H2516V212M2490.3 210.7L2502.3 199.3M2527.7 199.3L2539.7 210.7"/></svg>
<svg class="ic" style="left:2489px;top:294px" width="52" height="44" viewBox="2489 294 52 44" fill="none" stroke="#131722" stroke-width="2.2" ><path d="M2514.5 297.8L2535.5 309.6L2514.5 321.6L2493.5 309.6Z M2492 320.8L2514.5 333.5L2537 320.8"/></svg>
<svg class="ic" style="left:2489px;top:384px" width="52" height="54" viewBox="2489 384 52 54" fill="none" stroke="#131722" stroke-width="2.2" ><path d="M2499.5 416.5H2524.8a5 5 0 0 0 5-5V392a5 5 0 0 0-5-5H2497a5 5 0 0 0-5 5V424.5Z"/><path d="M2530.8 403.5H2532.8a5 5 0 0 1 5 5V432.5L2529.8 424.5H2516a5.5 5.5 0 0 1-5.5-5.5V417.5"/></svg>
<svg class="ic" style="left:2493px;top:900px" width="48" height="64" viewBox="2493 900 48 64" fill="none" stroke="#131722" stroke-width="2" ><path d="M2496 902V962M2496 927H2522M2525.7 927H2539M2496 947H2512.5L2530.2 910.5"/></svg>
<svg class="ic" style="left:2486px;top:995px" width="58" height="58" viewBox="2486 995 58 58" fill="none" stroke="#131722" stroke-width="2.2" ><circle cx="2515" cy="1024" r="26.5"/><circle cx="2515" cy="1024" r="15"/><circle cx="2515" cy="1024" r="4" fill="#131722" stroke="none"/><path d="M2515 1024L2534.5 1004.5"/></svg>
<svg class="ic" style="left:2489px;top:1090px" width="52" height="52" viewBox="2489 1090 52 52" fill="none" stroke="#131722" stroke-width="2.2" ><rect x="2492" y="1097" width="46" height="42" rx="5"/><path d="M2492 1111H2538"/><rect x="2500.5" y="1093.2" width="5" height="9.6" rx="1.2" fill="#fff"/><rect x="2524.5" y="1093.2" width="5" height="9.6" rx="1.2" fill="#fff"/></svg>
<svg class="ic" style="left:2487px;top:1184px" width="56" height="48" viewBox="2487 1184 56 48" fill="none" stroke="#131722" stroke-width="2.2" ><circle cx="2508" cy="1196.8" r="10"/><circle cx="2528" cy="1201" r="6"/><path d="M2490.2 1224C2490.2 1215 2498 1211 2508 1211C2518 1211 2525.8 1215 2525.8 1224Q2525.8 1228.8 2521.5 1228.8H2494.5Q2490.2 1228.8 2490.2 1224Z"/><path d="M2521 1212.5C2523 1211.5 2525.5 1211 2528 1211C2535 1211 2539.5 1214 2539.5 1219Q2539.5 1222.5 2536 1222.5H2527"/></svg>
<svg class="ic" style="left:2493px;top:1274px" width="46" height="52" viewBox="2493 1274 46 52" fill="none" stroke="#131722" stroke-width="2.2" ><path d="M2500 1311V1297C2500 1290 2504 1285 2510.5 1282.5A5.3 5.3 0 0 1 2521 1282.5C2527.5 1285 2532 1290 2532 1297V1311"/><rect x="2496" y="1311.3" width="40" height="5.6" rx="2.8"/><path d="M2510 1317.5A6 5.3 0 0 0 2522 1317.5"/></svg>
<svg class="ic" style="left:2488px;top:1365px" width="52" height="52" viewBox="2488 1365 52 52" fill="none" stroke="#131722" stroke-width="2.2" ><circle cx="2514" cy="1390.8" r="23.7"/><path d="M2506 1382A8 7.5 0 0 1 2522 1382C2522 1387.5 2514 1388 2514 1393.5V1396.2"/><circle cx="2514" cy="1404" r="2.9"/></svg>
</aside>
</body></html>
